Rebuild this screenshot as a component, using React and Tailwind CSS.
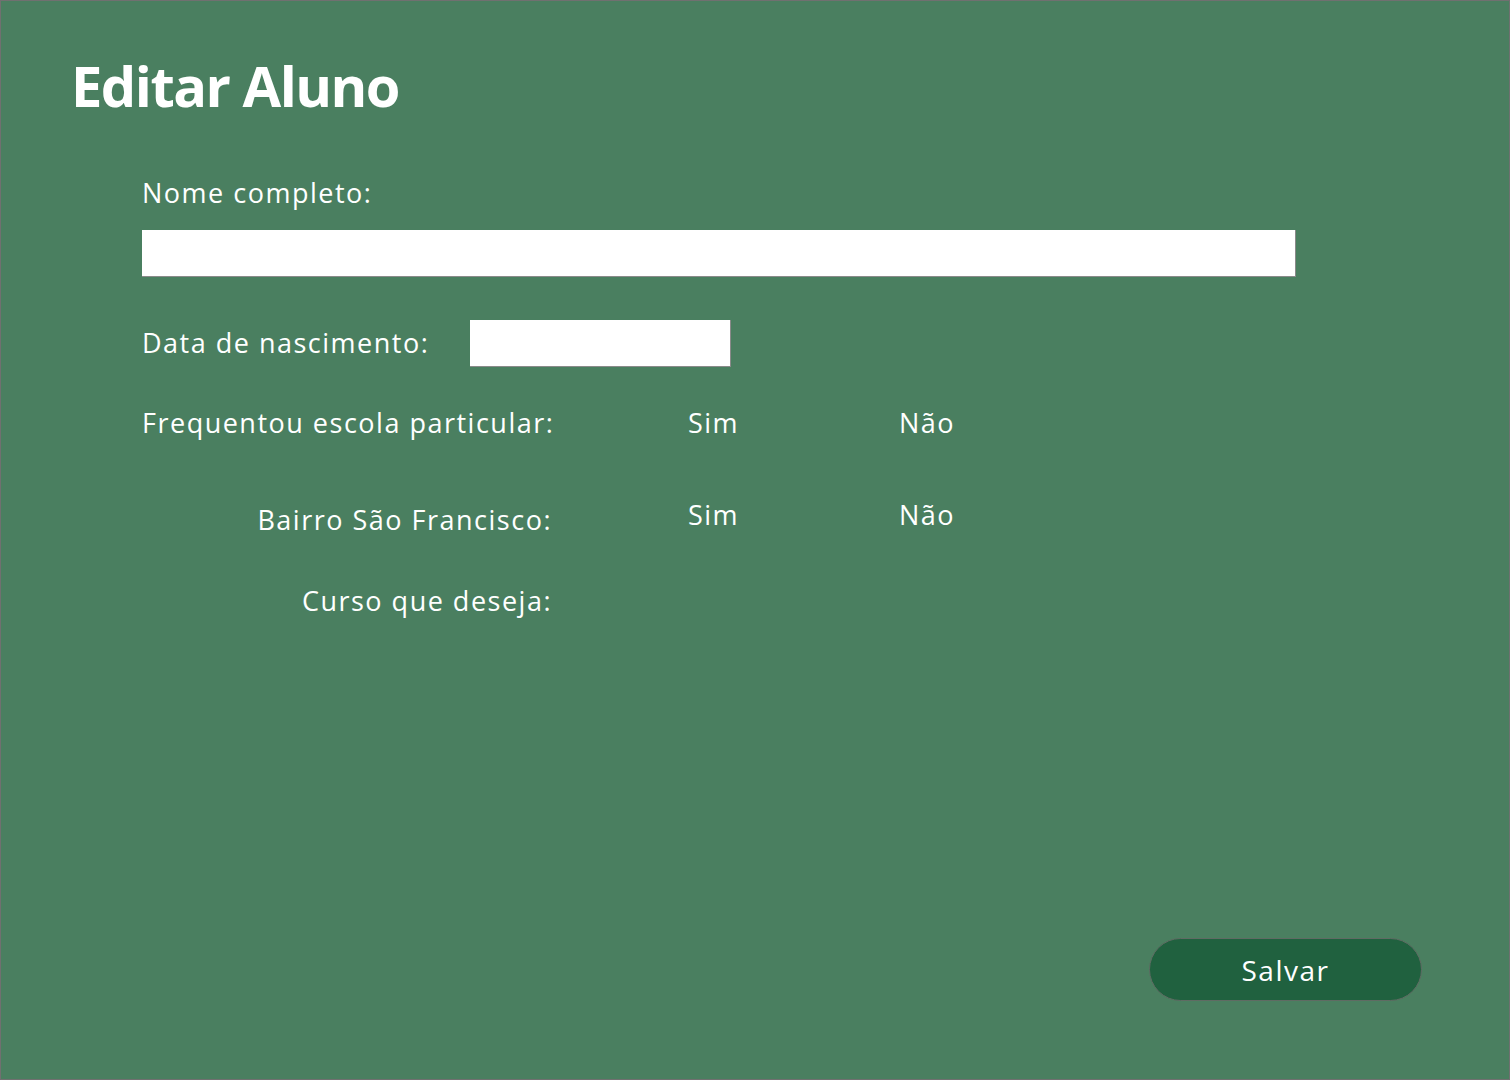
import React from "react";

function Choice({ shift }) {
  return (
    <div className={`flex items-start ${shift ? "-mt-[5px]" : ""}`}>
      <span className="w-[211px]">Sim</span>
      <span>Não</span>
    </div>
  );
}

function RadioRow({ label, shift, className }) {
  return (
    <div className={`flex items-start ${className}`}>
      <span className="w-[410px] text-right whitespace-nowrap">{label}</span>
      <div className="ml-[136px]">
        <Choice shift={shift} />
      </div>
    </div>
  );
}

export default function App() {
  return (
    <div className="w-[1510px] h-[1080px] bg-[#4a7f60] border border-[#707070] flex flex-col text-white font-['Open_Sans',sans-serif]">
      <h1 className="ml-[70px] mt-[56px] text-[56px] leading-none font-bold tracking-[-1.5px]">Editar Aluno</h1>

      <form className="flex flex-col pl-[141px] text-[27px] leading-none tracking-[1.5px]">
        <label className="mt-[66px]">Nome completo:</label>
        <div className="mt-[24px] w-[1154px] h-[47px] bg-white border-r border-b border-[#8a8a8a]" />

        <div className="mt-[43px] flex items-center">
          <label className="w-[328px] pb-[3px]">Data de nascimento:</label>
          <div className="w-[261px] h-[47px] bg-white border-r border-b border-[#8a8a8a]" />
        </div>

        <RadioRow label="Frequentou escola particular:" className="mt-[42px]" />
        <RadioRow label="Bairro São Francisco:" shift className="mt-[70px]" />

        <div className="mt-[54px] flex">
          <label className="w-[410px] text-right">Curso que deseja:</label>
        </div>
      </form>

      <div className="mt-auto mb-[78px] mr-[87px] flex justify-end">
        <button className="w-[273px] h-[63px] rounded-full bg-[#20613f] border border-[#5f6b63] text-[28px] tracking-[1.5px] text-white">
          Salvar
        </button>
      </div>
    </div>
  );
}
